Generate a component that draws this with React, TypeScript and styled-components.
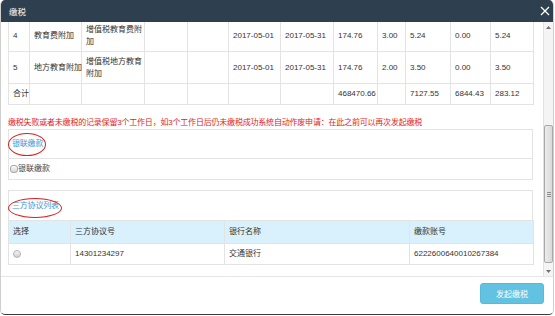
import React from "react";
import styled, { createGlobalStyle } from "styled-components";

const GlobalStyle = createGlobalStyle`
  html, body { margin: 0; padding: 0; background: #ffffff; }
  body {
    font-family: "Liberation Sans", "Noto Sans CJK SC", sans-serif;
    font-size: 8px;
    color: #333333;
  }
  * { box-sizing: border-box; }
`;

const Dialog = styled.div`
  width: 554px;
  height: 315px;
  display: flex;
  flex-direction: column;
  background: #ffffff;
  border: 1px solid #cfcfcf;
  border-top: none;
  border-bottom-color: #3c3c3c;
  border-radius: 5px;
  overflow: hidden;
`;

const TitleBar = styled.div`
  height: 22px;
  flex: none;
  margin: 0 -1px;
  background: #2e3f50;
  color: #ffffff;
  display: flex;
  align-items: center;
  justify-content: space-between;
  padding: 0 4px 0 9px;
  font-size: 8.5px;
`;

const CloseButton = styled.span`
  display: flex;
  width: 10px;
  height: 10px;
`;

const Body = styled.div`
  height: 254px;
  flex: none;
  display: flex;
`;

const Viewport = styled.div`
  flex: 1;
  overflow: hidden;
  padding: 0 10px 0 7px;
`;

const DataTable = styled.table`
  width: 100%;
  table-layout: fixed;
  border-collapse: collapse;
  margin-top: -3px;
`;

const Td = styled.td`
  border: 1px solid #e3e3e3;
  padding: 4px 1px 4px 4px;
  line-height: 12px;
  white-space: nowrap;
  vertical-align: middle;
  color: #333333;
`;

const WrapText = styled.span`
  display: block;
  width: 57px;
  white-space: normal;
  word-break: break-all;
  line-height: 11.5px;
`;

const Notice = styled.div`
  margin-top: 12px;
  line-height: 12px;
  color: #e42222;
  white-space: nowrap;
  letter-spacing: -0.2px;
`;

const Panel = styled.div`
  border: 1px solid #e3e3e3;
`;

const PanelTitle = styled.div<{ $pt: number; $pb: number }>`
  padding: ${(p) => p.$pt}px 3px ${(p) => p.$pb}px;
  line-height: 12px;
`;

const TitleText = styled.span`
  position: relative;
  display: inline-block;
  color: #3a97d8;
  letter-spacing: -0.2px;
`;

const Ring = styled.span<{ $t: number; $b: number; $l: number; $r: number }>`
  position: absolute;
  top: ${(p) => p.$t}px;
  bottom: ${(p) => p.$b}px;
  left: ${(p) => p.$l}px;
  right: ${(p) => p.$r}px;
  border: 1.3px solid #d91f1f;
  border-radius: 50%;
  pointer-events: none;
`;

const CheckRow = styled.label`
  display: flex;
  align-items: center;
  border-top: 1px solid #e3e3e3;
  padding: 4px 1px;
  line-height: 12px;
  color: #444444;
`;

const CheckBox = styled.span`
  width: 8px;
  height: 8px;
  border: 1px solid #a8a8a8;
  border-radius: 3px;
  background: linear-gradient(#fbfbfb, #d6d6d6);
`;

const ListSection = styled.div`
  margin-top: 10px;
`;

const ListHead = styled.div`
  border: 1px solid #e3e3e3;
  border-bottom: none;
`;

const ListTable = styled.table`
  width: 100%;
  table-layout: fixed;
  border-collapse: collapse;
`;

const Th = styled.th`
  background: #d9f1fc;
  border: 1px solid #e3e3e3;
  text-align: left;
  font-weight: normal;
  padding: 5px 4px;
  line-height: 12px;
  color: #333333;
`;

const Cell = styled.td`
  border: 1px solid #e3e3e3;
  padding: 4px 4px;
  line-height: 12px;
  color: #333333;
  vertical-align: middle;
`;

const Radio = styled.span`
  display: inline-block;
  vertical-align: middle;
  width: 8px;
  height: 8px;
  border-radius: 50%;
  border: 1px solid #b5b5b5;
  background: linear-gradient(#f6f6f6, #cfcfcf);
`;

const ScrollBar = styled.div`
  width: 10px;
  flex: none;
  display: flex;
  flex-direction: column;
  background: #f4f4f4;
  border-left: 1px solid #e2e2e2;
`;

const ScrollArrow = styled.div`
  height: 10px;
  display: flex;
  align-items: center;
  justify-content: center;
`;

const ScrollTrack = styled.div`
  flex: 1;
  display: flex;
  flex-direction: column;
`;

const ScrollThumb = styled.div<{ $offset: number; $size: number }>`
  margin-top: ${(p) => p.$offset}px;
  height: ${(p) => p.$size}px;
  border: 1px solid #a9a9a9;
  border-radius: 2px;
  background: linear-gradient(90deg, #ececec, #d9d9d9);
  display: flex;
  flex-direction: column;
  align-items: center;
  justify-content: center;
  gap: 1px;
`;

const Grip = styled.span`
  width: 4px;
  height: 1px;
  background: #8c8c8c;
`;

const Footer = styled.div`
  flex: 1;
  border-top: 1px solid #e6e6e6;
  display: flex;
  justify-content: flex-end;
  align-items: flex-start;
  padding: 6px 9px 0 0;
`;

const PrimaryButton = styled.button`
  width: 64px;
  height: 21px;
  background: #62c2e2;
  border: 1px solid #58b9da;
  border-radius: 3px;
  color: #ffffff;
  font-family: inherit;
  font-size: 8px;
  padding: 0;
`;

type Row = {
  no: string;
  name: string;
  tax: string;
  a: string;
  b: string;
  start: string;
  end: string;
  base: string;
  rate: string;
  due: string;
  paid: string;
  pay: string;
};

const rows: Row[] = [
  { no: "4", name: "教育费附加", tax: "增值税教育费附加", a: "", b: "", start: "2017-05-01", end: "2017-05-31", base: "174.76", rate: "3.00", due: "5.24", paid: "0.00", pay: "5.24" },
  { no: "5", name: "地方教育附加", tax: "增值税地方教育附加", a: "", b: "", start: "2017-05-01", end: "2017-05-31", base: "174.76", rate: "2.00", due: "3.50", paid: "0.00", pay: "3.50" },
  { no: "合计", name: "", tax: "", a: "", b: "", start: "", end: "", base: "468470.66", rate: "", due: "7127.55", paid: "6844.43", pay: "283.12" },
];

const widths = [21, 52, 63, 43, 41, 52, 53, 44, 28, 45, 40, 43];

export default function App() {
  return (
    <>
      <GlobalStyle />
      <Dialog>
        <TitleBar>
          <span>缴税</span>
          <CloseButton>
            <svg width="10" height="10" viewBox="0 0 10 10">
              <path d="M1 1 L9 9 M9 1 L1 9" stroke="#ffffff" strokeWidth="1.3" />
            </svg>
          </CloseButton>
        </TitleBar>
        <Body>
          <Viewport>
            <DataTable>
              <colgroup>
                {widths.map((w, i) => (
                  <col key={i} style={{ width: w }} />
                ))}
              </colgroup>
              <tbody>
                {rows.map((r) => (
                  <tr key={r.no}>
                    <Td>{r.no}</Td>
                    <Td>{r.name}</Td>
                    <Td>{r.tax && <WrapText>{r.tax}</WrapText>}</Td>
                    <Td>{r.a}</Td>
                    <Td>{r.b}</Td>
                    <Td>{r.start}</Td>
                    <Td>{r.end}</Td>
                    <Td>{r.base}</Td>
                    <Td>{r.rate}</Td>
                    <Td>{r.due}</Td>
                    <Td>{r.paid}</Td>
                    <Td>{r.pay}</Td>
                  </tr>
                ))}
              </tbody>
            </DataTable>
            <Notice>
              缴税失败或者未缴税的记录保留3个工作日，如3个工作日后仍未缴税成功系统自动作废申请：在此之前可以再次发起缴税
            </Notice>
            <Panel>
              <PanelTitle $pt={8} $pb={8}>
                <TitleText>
                  银联缴款
                  <Ring $t={-5} $b={-6} $l={-4} $r={-3} />
                </TitleText>
              </PanelTitle>
              <CheckRow>
                <CheckBox />
                <span>银联缴款</span>
              </CheckRow>
            </Panel>
            <ListSection>
              <ListHead>
                <PanelTitle $pt={9} $pb={8}>
                  <TitleText>
                    三方协议列表
                    <Ring $t={-2} $b={-6} $l={-4} $r={-3} />
                  </TitleText>
                </PanelTitle>
              </ListHead>
              <ListTable>
                <colgroup>
                  <col style={{ width: 62 }} />
                  <col style={{ width: 154 }} />
                  <col style={{ width: 185 }} />
                  <col style={{ width: 124 }} />
                </colgroup>
                <thead>
                  <tr>
                    <Th>选择</Th>
                    <Th>三方协议号</Th>
                    <Th>银行名称</Th>
                    <Th>缴款账号</Th>
                  </tr>
                </thead>
                <tbody>
                  <tr>
                    <Cell>
                      <Radio />
                    </Cell>
                    <Cell>14301234297</Cell>
                    <Cell>交通银行</Cell>
                    <Cell>6222600640010267384</Cell>
                  </tr>
                </tbody>
              </ListTable>
            </ListSection>
          </Viewport>
          <ScrollBar>
            <ScrollArrow>
              <svg width="5" height="3" viewBox="0 0 5 3">
                <path d="M0 3 L2.5 0 L5 3 Z" fill="#707070" />
              </svg>
            </ScrollArrow>
            <ScrollTrack>
              <ScrollThumb $offset={93} $size={138}>
                <Grip />
                <Grip />
                <Grip />
              </ScrollThumb>
            </ScrollTrack>
            <ScrollArrow>
              <svg width="5" height="3" viewBox="0 0 5 3">
                <path d="M0 0 L5 0 L2.5 3 Z" fill="#707070" />
              </svg>
            </ScrollArrow>
          </ScrollBar>
        </Body>
        <Footer>
          <PrimaryButton>发起缴税</PrimaryButton>
        </Footer>
      </Dialog>
    </>
  );
}
